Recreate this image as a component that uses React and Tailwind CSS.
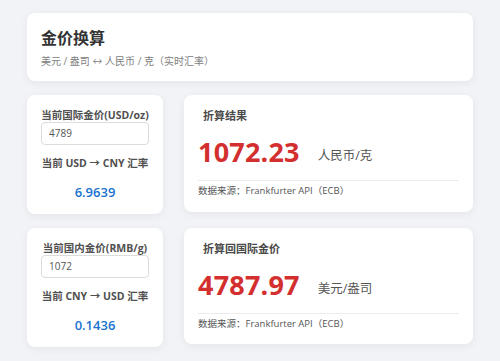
export default function App() {
  const font = { fontFamily: '"Open Sans", "Noto Sans CJK SC", sans-serif' };
  const LeftCard = ({ label, value, rateLabel, rate }) => (
    <div className="w-[136px] h-[119px] bg-white rounded-[8px] shadow-[0_2px_8px_rgba(0,0,0,0.06)] px-[14px] pt-[14px] flex flex-col items-center">
      <div className="text-[10.5px] leading-[12px] font-bold text-[#505050] whitespace-nowrap">{label}</div>
      <div className="mt-[1px] w-full h-[23px] border border-[#dcdcdc] rounded-[4px] flex items-center px-[7px] text-[10px] text-[#555]">{value}</div>
      <div className="mt-[12px] text-[10.5px] leading-[12px] font-bold text-[#505050] whitespace-nowrap">{rateLabel}</div>
      <div className="mt-[15px] text-[13px] leading-[16px] font-semibold text-[#1a73d0]">{rate}</div>
    </div>
  );
  const RightCard = ({ title, num, unit, h }) => (
    <div className={`flex-1 ${h} bg-white rounded-[8px] shadow-[0_2px_8px_rgba(0,0,0,0.06)] px-[14px] pt-[14px] flex flex-col`}>
      <div className="pl-[5px] text-[11px] leading-[14px] font-semibold text-[#4a4a4a]">{title}</div>
      <div className="mt-[14px] h-[30px] flex items-end">
        <span className="text-[27px] leading-[30px] font-bold text-[#d32f2f] tracking-[0.2px]">{num}</span>
        <span className="ml-[18px] mb-[3px] text-[12.5px] leading-[16px] text-[#555]">{unit}</span>
      </div>
      <div className="mt-[13px] h-px bg-[#ececec]" />
      <div className="mt-[4px] text-[9.5px] leading-[12px] text-[#555]">数据来源：Frankfurter API（ECB）</div>
    </div>
  );
  return (
    <div style={font} className="w-[500px] h-[361px] bg-[#f2f3f7] pt-[13px] px-[27px]">
      <div className="h-[68px] bg-white rounded-[8px] shadow-[0_2px_8px_rgba(0,0,0,0.06)] px-[14px] pt-[15px]">
        <div className="text-[16px] leading-[20px] font-bold text-[#333]">金价换算</div>
        <div className="mt-[6px] text-[10px] leading-[14px] text-[#808080]">美元 / 盎司 ↔ 人民币 / 克（实时汇率）</div>
      </div>
      <div className="mt-[14px] flex items-start gap-[21px]">
        <LeftCard label="当前国际金价(USD/oz)" value="4789" rateLabel="当前 USD → CNY 汇率" rate="6.9639" />
        <RightCard title="折算结果" num="1072.23" unit="人民币/克" h="h-[117px]" />
      </div>
      <div className="mt-[14px] flex items-start gap-[21px]">
        <LeftCard label="当前国内金价(RMB/g)" value="1072" rateLabel="当前 CNY → USD 汇率" rate="0.1436" />
        <RightCard title="折算回国际金价" num="4787.97" unit="美元/盎司" h="h-[116px]" />
      </div>
    </div>
  );
}
